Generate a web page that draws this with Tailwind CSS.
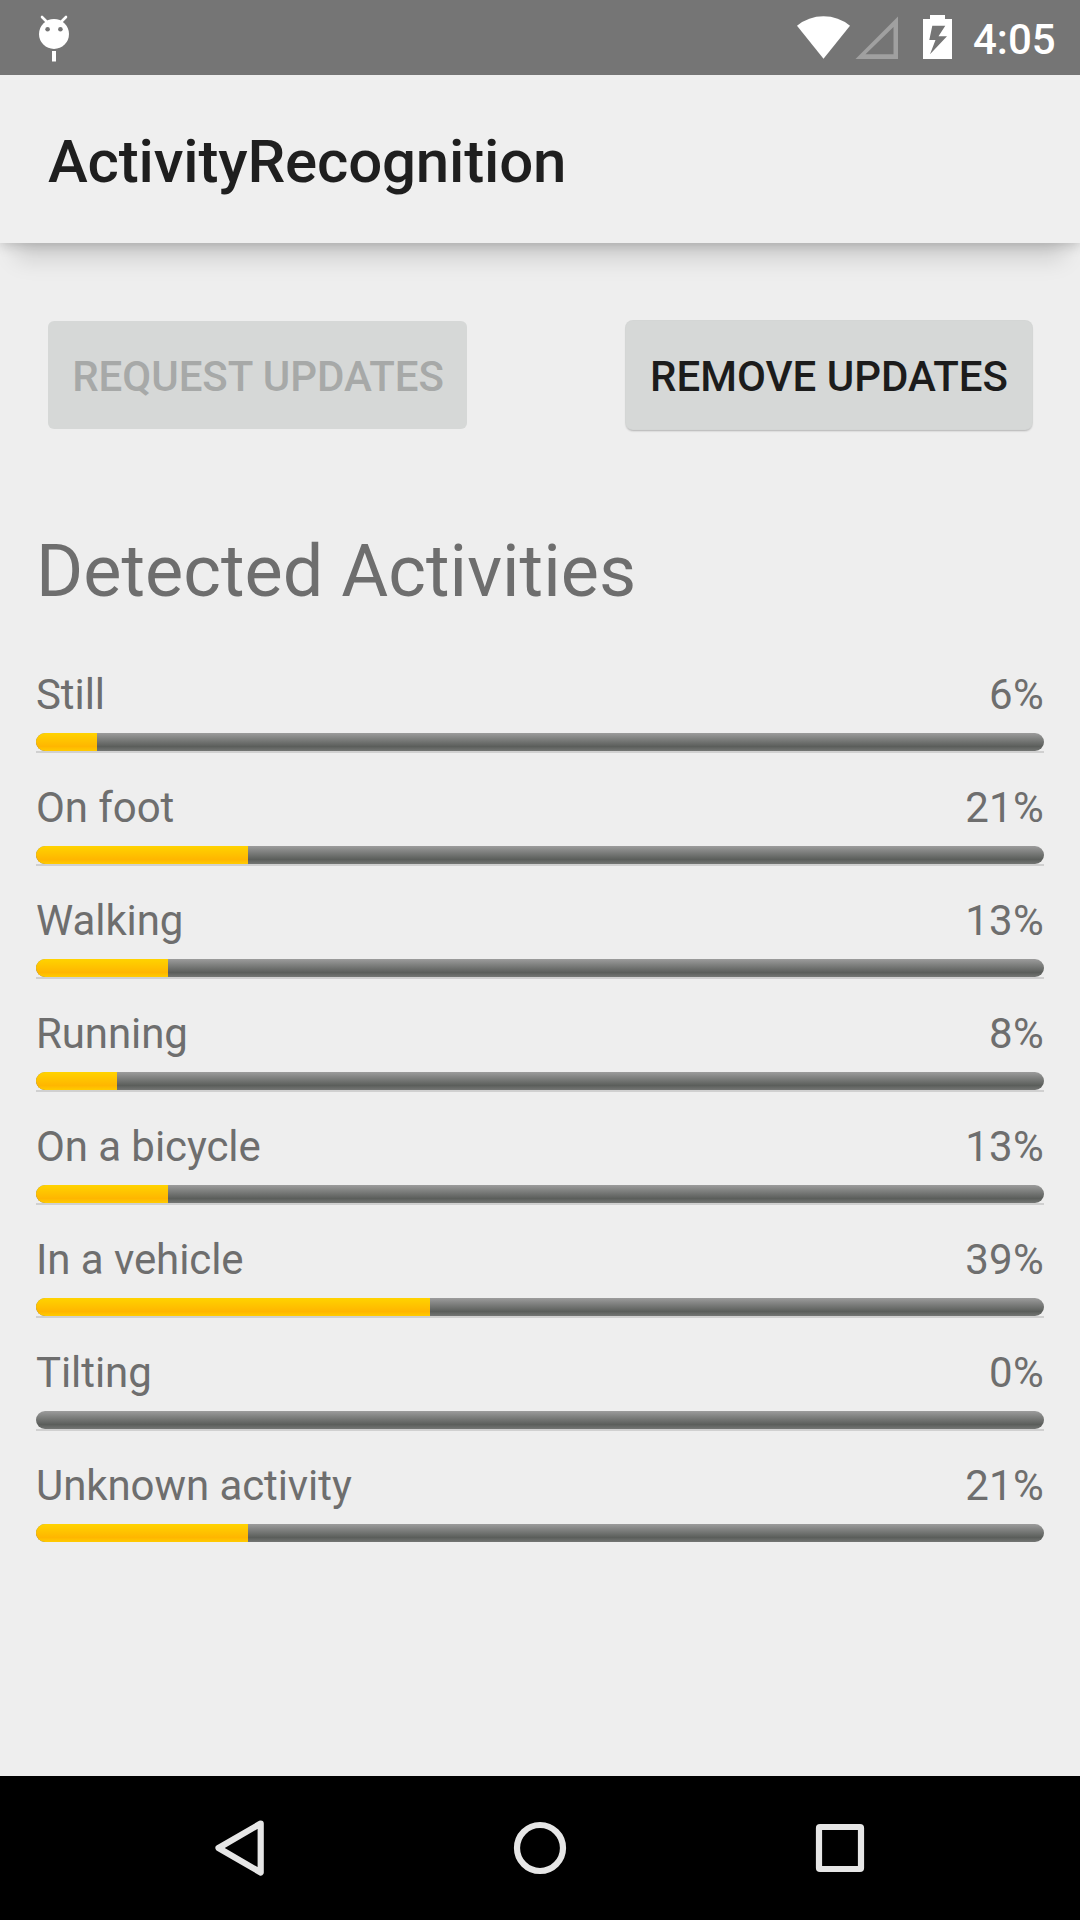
<!DOCTYPE html>
<html lang="en">
<head>
<meta charset="utf-8">
<title>ActivityRecognition</title>
<script src="https://cdn.jsdelivr.net/npm/@tailwindcss/browser@4"></script>
</head>
<body class="w-[1080px] h-[1920px] overflow-hidden bg-[#eeeeee] flex flex-col font-['Roboto',sans-serif] text-[#6e6e6e]">
<header class="h-[75px] shrink-0 bg-[#757575] flex items-start justify-between relative z-10">
  <svg class="w-[80px] h-[75px]" viewBox="0 0 80 75" fill="#fff"><circle cx="54" cy="34" r="15"/><path d="M42 17l7 7M66 17l-7 7" stroke="#fff" stroke-width="2.6" stroke-linecap="round"/><circle cx="47.6" cy="29.3" r="2.3" fill="#757575"/><circle cx="60.4" cy="29.3" r="2.3" fill="#757575"/><path d="M52 51h4v10.500h-4z"/></svg>
  <div class="flex">
    <svg class="w-[180px] h-[75px]" viewBox="780 0 180 75" fill="#fff"><path d="M823.500 58.800L797 25.700Q808.500 16.200 823.500 16.200T850 25.700Z"/><path fill="#a0a0a0" fill-rule="evenodd" d="M855.500 59L898 16.500V59ZM865.500 54.300H893.500V27Z"/><path fill-rule="evenodd" d="M923 19h7v-4h15v4h7v40h-29zM932.300 25.700L929.300 40h6.200L930 54.300 947 36.200h-8.500L945.300 25.700z"/></svg>
    <div class="w-[120px] pl-[13px] pt-[15px] text-[42px] leading-[49px] font-medium text-white">4:05</div>
  </div>
</header>
<div class="h-[168px] shrink-0 bg-[#efefef] flex items-center pl-[48px] pt-[6px] shadow-[0_32px_22px_-16px_rgba(0,0,0,0.13),0_2px_12px_rgba(0,0,0,0.2)]">
  <h1 class="text-[60px] leading-[70px] font-medium tracking-[-0.17px] text-[#1f1f1f]">ActivityRecognition</h1>
</div>
<main class="flex-1 px-[36px] pt-[78px]">
  <div class="flex justify-between pl-[12px] pr-[12px]">
    <button class="w-[419px] h-[108px] rounded-[6px] bg-[#d6d8d7] text-[42px] leading-[49px] pt-[2px] pl-[1px] font-medium text-[#a7a9a8] whitespace-nowrap tracking-[-0.03px]">REQUEST UPDATES</button>
    <button class="w-[406px] h-[108px] rounded-[7px] bg-[#d6d8d7] text-[42px] leading-[49px] pt-[2px] font-medium text-[#1c1c1c] whitespace-nowrap shadow-[0_0_0_1px_#d4d6d5,0_2px_2px_rgba(0,0,0,0.26)]">REMOVE UPDATES</button>
  </div>
  <h2 class="mt-[101px] text-[72px] leading-[84px] tracking-[0.03px]">Detected Activities</h2>
  <div id="rows" class="mt-[56px]"></div>
</main>
<nav class="h-[144px] shrink-0 bg-black">
  <svg class="w-[1080px] h-[144px]" viewBox="0 1776 1080 144" fill="none" stroke="#e6e6e6" stroke-width="6.200" stroke-linejoin="round"><path d="M260.700 1823.500L218.500 1848 260.700 1872.500Z"/><circle cx="540" cy="1848" r="23"/><rect x="819" y="1827" width="42" height="42" rx="1"/></svg>
</nav>
<script>
const data = [['Still',6],['On foot',21],['Walking',13],['Running',8],['On a bicycle',13],['In a vehicle',39],['Tilting',0],['Unknown activity',21]];
document.getElementById('rows').innerHTML = data.map(([n,p],i) => `
<div class="h-[113px]">
  <div class="flex justify-between text-[42px] leading-[49px] h-[63px]"><span class="tracking-[-0.08px]">${n}</span><span class="tracking-[0.3px]">${p}%</span></div>
  <div class="h-[18px] rounded-[9px] overflow-hidden bg-linear-to-b from-[#9c9c9c] via-[#5b5e5b] via-75% to-[#747674]"><div class="h-full bg-linear-to-b from-[#ffd300] via-[#ffb600] via-75% to-[#ffcb00]" style="width:${Math.ceil(p * 10.08)}px"></div></div>
  ${i < data.length-1 ? '<div class="h-[2px] bg-[#d0d0d0]"></div>' : ''}
</div>`).join('');
</script>
</body>
</html>
